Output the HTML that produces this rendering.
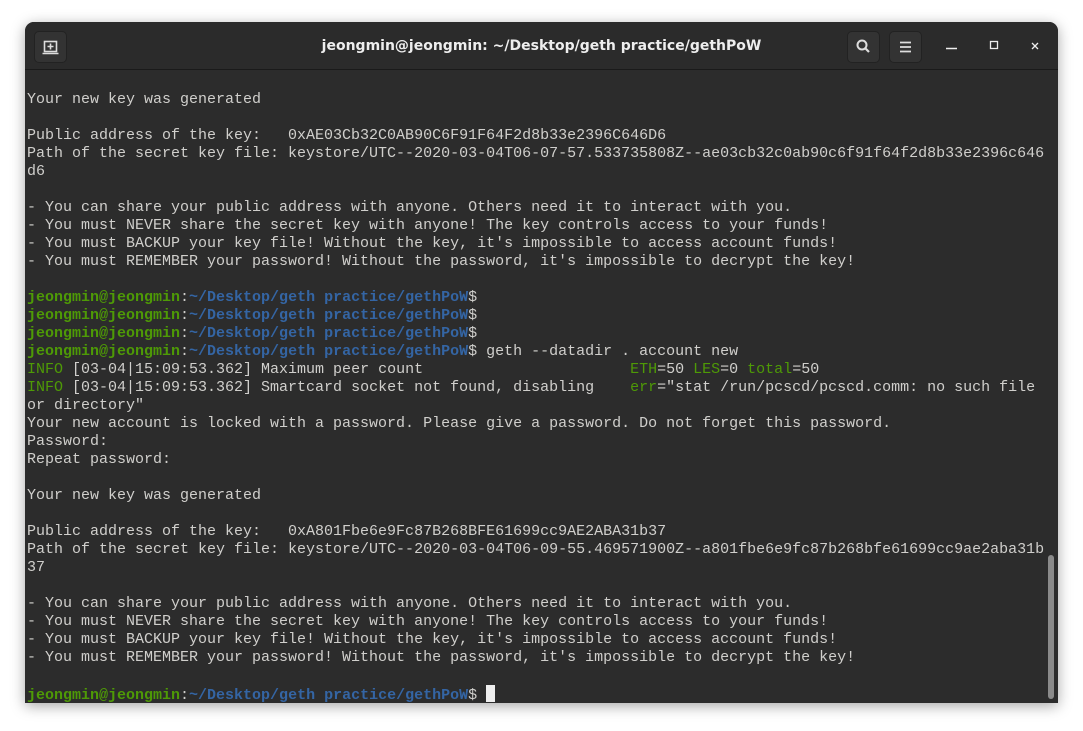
<!DOCTYPE html>
<html><head><meta charset="utf-8"><style>
html,body{margin:0;padding:0;width:1083px;height:731px;background:#fff;overflow:hidden}
.win{position:absolute;left:25px;top:22px;width:1033px;height:681px;background:#2c2c2c;border-radius:9px 9px 0 0;box-shadow:0 3px 14px rgba(0,0,0,.35);overflow:hidden}
.hb{position:absolute;left:0;top:0;width:100%;height:47px;background:#2b2b2b;border-bottom:1px solid #1a1a1a}
.title{position:absolute;left:0;right:0;top:16px;text-align:center;color:#eee;font:bold 14px "DejaVu Sans","Liberation Sans",sans-serif}
.btn{position:absolute;top:9px;width:33px;height:32px;border-radius:5px;background:#333;border:1px solid #222;box-sizing:border-box}
.term{position:absolute;left:2px;top:69px;margin:0;font:15px/18px "Liberation Mono","DejaVu Sans Mono",monospace;color:#d0cfcc;white-space:pre}
.g{color:#4e9a06;font-weight:bold}.b{color:#3465a4;font-weight:bold}.gr{color:#4e9a06}.cy{color:#3465a4}
.sb{position:absolute;left:1023px;top:533px;width:6px;height:144px;background:#8a8a8a;border-radius:3px}
.cur{display:inline-block;width:9px;height:17px;background:#eee;vertical-align:-3px}
</style></head><body>
<div class="win">
<div class="hb">
<div class="btn" style="left:9px"><svg width="33" height="32" style="position:absolute;left:-1px;top:-1px"><rect x="10.5" y="10.5" width="12" height="10" fill="none" stroke="#ddd" stroke-width="1.6"/><path d="M8.5 22.5h16M16.5 12.5v6M13.5 15.5h6" stroke="#ddd" stroke-width="1.6"/></svg></div>
<div class="title">jeongmin@jeongmin: ~/Desktop/geth practice/gethPoW</div>
<div class="btn" style="left:822px"><svg width="33" height="32" style="position:absolute;left:-1px;top:-1px"><circle cx="15" cy="14" r="4.5" fill="none" stroke="#ddd" stroke-width="2"/><path d="M18 17l4 4" stroke="#ddd" stroke-width="2.2"/></svg></div>
<div class="btn" style="left:864px"><svg width="33" height="32" style="position:absolute;left:-1px;top:-1px"><path d="M11 11.5h11M11 16h11M11 20.5h11" stroke="#ddd" stroke-width="1.8"/></svg></div>
<svg width="120" height="47" style="position:absolute;left:913px;top:0"><path d="M8 26.5h11" stroke="#eee" stroke-width="1.5"/><rect x="52.5" y="19.5" width="7" height="7" fill="none" stroke="#eee" stroke-width="1.3"/><path d="M94 21l6 6M100 21l-6 6" stroke="#eee" stroke-width="1.3"/></svg>
</div>
<pre class="term">
Your new key was generated

Public address of the key:   0xAE03Cb32C0AB90C6F91F64F2d8b33e2396C646D6
Path of the secret key file: keystore/UTC--2020-03-04T06-07-57.533735808Z--ae03cb32c0ab90c6f91f64f2d8b33e2396c646
d6

- You can share your public address with anyone. Others need it to interact with you.
- You must NEVER share the secret key with anyone! The key controls access to your funds!
- You must BACKUP your key file! Without the key, it's impossible to access account funds!
- You must REMEMBER your password! Without the password, it's impossible to decrypt the key!

<span class="g">jeongmin@jeongmin</span>:<span class="b">~/Desktop/geth practice/gethPoW</span>$
<span class="g">jeongmin@jeongmin</span>:<span class="b">~/Desktop/geth practice/gethPoW</span>$
<span class="g">jeongmin@jeongmin</span>:<span class="b">~/Desktop/geth practice/gethPoW</span>$
<span class="g">jeongmin@jeongmin</span>:<span class="b">~/Desktop/geth practice/gethPoW</span>$ geth --datadir . account new
<span class="gr">INFO</span> [03-04|15:09:53.362] Maximum peer count                       <span class="gr">ETH</span>=50 <span class="gr">LES</span>=0 <span class="gr">total</span>=50
<span class="gr">INFO</span> [03-04|15:09:53.362] Smartcard socket not found, disabling    <span class="gr">err</span>="stat /run/pcscd/pcscd.comm: no such file
or directory"
Your new account is locked with a password. Please give a password. Do not forget this password.
Password:
Repeat password:

Your new key was generated

Public address of the key:   0xA801Fbe6e9Fc87B268BFE61699cc9AE2ABA31b37
Path of the secret key file: keystore/UTC--2020-03-04T06-09-55.469571900Z--a801fbe6e9fc87b268bfe61699cc9ae2aba31b
37

- You can share your public address with anyone. Others need it to interact with you.
- You must NEVER share the secret key with anyone! The key controls access to your funds!
- You must BACKUP your key file! Without the key, it's impossible to access account funds!
- You must REMEMBER your password! Without the password, it's impossible to decrypt the key!

<span class="g">jeongmin@jeongmin</span>:<span class="b">~/Desktop/geth practice/gethPoW</span>$ <span class="cur"></span></pre>
<div class="sb"></div>
</div>
</body></html>
